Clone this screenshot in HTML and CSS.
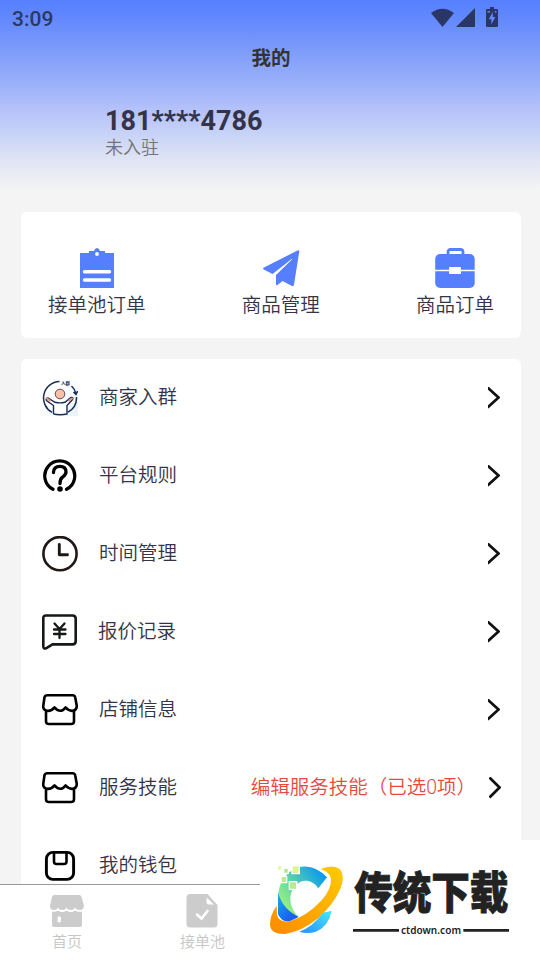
FILE: index.html
```html
<!DOCTYPE html>
<html lang="zh-CN">
<head>
<meta charset="utf-8">
<title>我的</title>
<link rel="stylesheet" href="styles.css">
</head>
<body>
<div class="screen">
  <header class="hero">
    <div class="status">
      <span class="clock">3:09</span>
      <svg class="status-icons" viewBox="0 0 70 22" width="70" height="22">
        <path d="M1 6Q12.500-2.500 24 6L12.500 20Z"/>
        <path d="M45 1V20H26Z"/>
        <path fill-rule="evenodd" d="M60 0h4v2h3q1 0 1 1v16q0 1-1 1H57q-1 0-1-1V3q0-1 1-1h3zM62.800 5L58.800 12.300h2.600v5L65.400 10h-2.600zM57.500 4h2.500v1.500h-2.500zM64.800 4h1.600v1.500h-1.600z"/>
      </svg>
    </div>
    <h1 class="title">我的</h1>
    <div class="profile">
      <div class="phone">181****4786</div>
      <div class="state">未入驻</div>
    </div>
  </header>

  <section class="card shortcuts">
    <div class="shortcut">
      <svg viewBox="0 0 42 42" width="42" height="42"><path d="M4 5h9V3h5q1-3 3-3t3 3h5v2h9v35H4z" fill="#557fff"/><circle cx="21" cy="6" r="1.900" fill="#fff"/><path d="M8.500 23.700h25M8.500 32h25" stroke="#fff" stroke-width="3.500" stroke-linecap="round"/></svg>
      <span>接单池订单</span>
    </div>
    <div class="shortcut">
      <svg viewBox="0 0 42 42" width="42" height="42"><path d="M37.500 2.500Q39.600 1.500 39.200 4L34 36.500Q33.500 39 31.500 37.800L22.500 33 17.500 37Q16 38 16 36V27L32 11.500 32 10.800 12.500 26 3.800 21.500Q2.200 20.500 4 19.500Z" fill="#557fff"/></svg>
      <span>商品管理</span>
    </div>
    <div class="shortcut">
      <svg viewBox="0 0 42 42" width="42" height="42"><path d="M14 8V4q0-2.500 2.500-2.500h10Q29 1.500 29 4v4" fill="none" stroke="#557fff" stroke-width="2.800"/><rect x="1.200" y="6" width="39.500" height="34" rx="5" fill="#557fff"/><path d="M1 22.500h40" stroke="#fff" stroke-width="1.700"/><rect x="15" y="19" width="12" height="7" rx=".8" fill="#fff"/></svg>
      <span>商品订单</span>
    </div>
  </section>

  <section class="card menu">
    <div class="row">
      <svg class="icon" viewBox="0 0 36 36" width="36" height="36">
        <defs><linearGradient id="tile" x2="1" y2="1"><stop offset=".3" stop-color="#fff"/><stop offset="1" stop-color="#e9f3fb"/></linearGradient></defs>
        <path d="M0 0h36v36H0z" fill="url(#tile)"/>
        <path d="M17.500 1.500A16.500 16.500 0 0 0 10 32.400M26 32.200A16.500 16.500 0 0 0 34.500 17M29.500 6Q33 9 34 14M31.500 12l2.500 2.500L35.600 11" fill="none" stroke="#1b2e50" stroke-width="1.500"/>
        <path d="M11.500 34V25.500L4.500 20.500Q3.500 18 6 18L13 22.300Q18 23.500 23 22.300L29 17.500Q31.500 17 30.500 19.500L25 25.500V34Q18 35.500 11.500 34" fill="#fff" stroke="#1b2e50" stroke-width="1.400"/>
        <path d="M5 18.500l3 2M30 18.500l-3 2" stroke="#ef8f79" stroke-width="2" stroke-linecap="round"/>
        <circle cx="18" cy="14" r="4.800" fill="#fac0a4" stroke="#61495a" stroke-width="1"/>
        <text class="tiny" x="19" y="4.500">入群</text>
      </svg>
      <span class="label">商家入群</span>
      <svg class="arrow" viewBox="0 0 12 22" width="12" height="22"><path d="M-.5 .5L10.500 10.500-.5 20.500"/></svg>
    </div>
    <div class="row">
      <svg class="icon line" viewBox="0 0 36 36" width="36" height="36"><path d="M11 31.300A15 15 0 1 1 24.500 31.300" stroke-width="3.200"/><path d="M11.500 14.500Q11.500 8.300 17.800 8.300 24 8.300 24 14 24 16.500 20.500 19.200 18 21 18 25.500" stroke-width="3.300"/><circle cx="18" cy="31" r="1.500" fill="#000"/></svg>
      <span class="label">平台规则</span>
      <svg class="arrow" viewBox="0 0 12 22" width="12" height="22"><path d="M-.5 .5L10.500 10.500-.5 20.500"/></svg>
    </div>
    <div class="row">
      <svg class="icon line warm" viewBox="0 0 36 36" width="36" height="36"><circle cx="18" cy="17.700" r="16.600"/><path d="M17.300 8.500V18.700H25.500" stroke-width="2.900"/></svg>
      <span class="label">时间管理</span>
      <svg class="arrow" viewBox="0 0 12 22" width="12" height="22"><path d="M-.5 .5L10.500 10.500-.5 20.500"/></svg>
    </div>
    <div class="row">
      <svg class="icon line dark" viewBox="0 0 36 36" width="36" height="36"><path d="M4 1.500H30.500Q33.700 1.500 33.700 4.800V27.300Q33.700 30.400 30.500 30.400H10.500L4 34.300Q1.300 35.300 1.300 32.300V4.300Q1.300 1.500 4 1.500Z"/><path d="M12.500 9.500l5 5.500 5-5.500M17.500 15v9M12 15.500h11.500M12 20h11.500" stroke-width="2.300"/></svg>
      <span class="label quote">报价记录</span>
      <svg class="arrow" viewBox="0 0 12 22" width="12" height="22"><path d="M-.5 .5L10.500 10.500-.5 20.500"/></svg>
    </div>
    <div class="row">
      <svg class="icon line" viewBox="0 0 36 36" width="36" height="36"><path d="M5.500 3.200H30.500Q33 3.200 33.300 5.700L34.800 14.200Q34.500 18.700 30 18.900 26.500 18.700 23.500 15.400 18.500 22.200 12.500 15.400 9.500 19.200 5.500 18.900 1 18.200 1.200 14.200L2.400 5.700Q2.700 3.200 5.500 3.200ZM4 19V29.200Q4 32 7 32H29Q32 32 32 29.200V19"/></svg>
      <span class="label">店铺信息</span>
      <svg class="arrow" viewBox="0 0 12 22" width="12" height="22"><path d="M-.5 .5L10.500 10.500-.5 20.500"/></svg>
    </div>
    <div class="row skill">
      <svg class="icon line" viewBox="0 0 36 36" width="36" height="36"><path d="M5.500 3.200H30.500Q33 3.200 33.300 5.700L34.800 14.200Q34.500 18.700 30 18.900 26.500 18.700 23.500 15.400 18.500 22.200 12.500 15.400 9.500 19.200 5.500 18.900 1 18.200 1.200 14.200L2.400 5.700Q2.700 3.200 5.500 3.200ZM4 19V29.200Q4 32 7 32H29Q32 32 32 29.200V19"/></svg>
      <span class="label">服务技能</span>
      <span class="note">编辑服务技能（已选0项）</span>
      <svg class="arrow" viewBox="0 0 12 22" width="12" height="22"><path d="M.5 .5L10.500 10.500 .5 20.500"/></svg>
    </div>
    <div class="row">
      <svg class="icon line" viewBox="0 0 36 36" width="36" height="36"><rect x="4.400" y="4.400" width="27.200" height="27" rx="6.500" stroke-width="2.900"/><path d="M12 5V13.500Q12 16 14.500 16H22Q24.500 16 24.500 13.500V5"/></svg>
      <span class="label">我的钱包</span>
    </div>
  </section>
</div>

<nav class="tabs">
  <div class="tab home">
    <svg viewBox="0 0 36 36" width="36" height="36" fill="#ccc"><path d="M5 2H30Q32 2 32.500 4L35 13Q34.500 17 30.500 17 27 17 26 14.500 25 17 22 17 18.500 17 17.500 14.500 16.500 17 13.500 17 10 17 9 14.500 8 17 5 17 1 17 1 13L3 4Q3.500 2 5 2Z"/><path fill-rule="evenodd" d="M3 18.500Q6.500 19.500 9 17.500 13 20.500 17.500 17.500 22 20.500 26 17.500 29 19.500 33 18.500V32Q33 34 31 34H5Q3 34 3 32ZM8.500 24.500V28.500Q10.200 30.500 12 28.500V24.500Q10.200 22 8.500 24.500Z"/></svg>
    <span>首页</span>
  </div>
  <div class="tab">
    <svg class="pool" viewBox="0 0 36 36" width="36" height="36"><path d="M6.500 1H23.500L33.500 12V31Q33.500 34.500 30 34.500H6.500Q2.500 34.500 2.500 31V5Q2.500 1 6.500 1Z" fill="#ccc"/><path d="M22.500 4.500V9Q22.500 11.500 25 11.500H30Z" fill="#fff"/><path d="M13 21.500l4.500 4L23.500 18" fill="none" stroke="#fff" stroke-width="2.600" stroke-linecap="round"/></svg>
    <span>接单池</span>
  </div>
</nav>

<aside class="brand">
  <svg viewBox="15 15 840 360" width="280" height="120">
    <defs>
      <linearGradient id="cyan" gradientUnits="userSpaceOnUse" x1="80" y1="210" x2="205" y2="115"><stop offset="0" stop-color="#9bf17c"/><stop offset=".4" stop-color="#5fd5a8"/><stop offset="1" stop-color="#0799ee"/></linearGradient>
      <linearGradient id="blue" x2="1" y2="1"><stop stop-color="#16b0f0"/><stop offset=".5" stop-color="#1976ee"/><stop offset="1" stop-color="#1b48ec"/></linearGradient>
      <linearGradient id="orange" x1="0" y1="1" x2="1" y2="0"><stop stop-color="#ff8a00"/><stop offset="1" stop-color="#ffcb00"/></linearGradient>
      <linearGradient id="tail" x1="0" y1="1" x2="1" y2="0"><stop stop-color="#278cff"/><stop offset="1" stop-color="#47ebff"/></linearGradient>
    </defs>
    <path d="M126 98Q175 83 216 127L190 160C172 133 140 130 120 153 98 178 102 220 132 246Q84 232 69 180 75 120 126 98Z" fill="url(#cyan)"/>
    <path d="M69 172Q82 222 131 246L104 259Q80 262 69 238Z" fill="url(#blue)"/>
    <path d="M196 103Q230 87 253 101 273 122 254 166 233 211 190 249 143 288 90 297 48 298 45 270 44 242 65 212L66 240Q72 263 103 259 155 245 200 196 230 162 228 130 222 109 196 103Z" fill="url(#orange)"/>
    <path d="M133 290Q173 275 204 233L230 227Q222 273 181 291 155 297 133 290Z" fill="url(#tail)"/>
    <g stroke="#fff" stroke-width="4"><path d="M111 92h22v24h-22z" fill="#dff391"/><path d="M86 100h14v15H86z" fill="#a9e98d"/><path d="M78 124h17v19H78z" fill="#b4ed89"/><path d="M103 140h22v23h-22z" fill="#b4ed89"/></g>
    <path d="M69 93h9v11h-9z" fill="#e8f5a4"/>
    <path d="M294 286H432M625 286H762" stroke="#222" stroke-width="8"/>
    <text class="brand-name" transform="translate(298 221) scale(1 1.150)" textLength="462">传统下载</text>
    <text class="brand-url" x="438" y="297" textLength="180">ctdown.com</text>
  </svg>
</aside>
</body>
</html>
```

FILE: styles.css
```css
* { box-sizing: border-box; }
body {
  margin: 0;
  width: 540px;
  height: 960px;
  overflow: hidden;
  background: #f4f4f4;
  color: #343348;
  font-family: Roboto, "Noto Sans CJK SC", sans-serif;
  font-weight: 350;
  display: flex;
  flex-direction: column;
}
.screen { height: 884px; flex: none; overflow: hidden; }
.hero {
  height: 212px;
  background: linear-gradient(#557fff 0, #6b8ffc 30px, #93abf9 75px, #b0bffa 105px, #c9d4f7 136px, #e0e4f4 160px, #f4f4f4 190px);
}
.status {
  height: 38px;
  padding: 0 40px 0 12px;
  display: flex;
  justify-content: space-between;
  align-items: center;
}
.clock { font-size: 21px; font-weight: 500; line-height: 38px; color: #2b3863; }
.status-icons { fill: #2a3766; margin-bottom: 2px; }
.title {
  margin: 0;
  text-align: center;
  color: #333;
  font-size: 19.500px;
  font-weight: 700;
  line-height: 42px;
  padding-left: 2px;
}
.profile { padding: 25px 0 0 105px; }
.phone { font-size: 27px; font-weight: 700; line-height: 33px; }
.state { font-size: 18px; line-height: 20px; color: #737373; }
.card { width: 500px; margin-left: 21px; background: #fff; border-radius: 6px; }
.shortcuts {
  height: 126px;
  padding: 35px 27px 0;
  display: flex;
  justify-content: space-between;
}
.shortcut {
  display: flex;
  flex-direction: column;
  align-items: center;
  font-size: 19.500px;
  line-height: 32px;
}
.shortcut svg { margin-top: 1px; }
.menu { margin-top: 21px; padding: 0 21px; }
.row { height: 78px; display: flex; align-items: center; font-size: 19.500px; }
.icon { flex: none; }
.line { fill: none; stroke: #000; stroke-width: 2.600; stroke-linecap: round; stroke-linejoin: round; }
.warm { stroke: #211715; }
.dark { stroke: #141818; }
.tiny { font-size: 4.500px; font-weight: 700; fill: #1b2e50; }
.label { margin-left: 21px; line-height: 30px; }
.quote { margin-left: 20px; }
.arrow { margin-left: auto; fill: none; stroke: #111; stroke-width: 2.700; }
.note { margin-left: auto; color: #e64a3f; line-height: 30px; }
.skill { margin-right: -1px; }
.skill .arrow { margin-left: 13px; }
.tabs {
  height: 76px;
  flex: none;
  border-top: 1px solid #999;
  background: #fff;
  display: grid;
  grid-template-columns: repeat(4, 135px);
}
.tab {
  display: flex;
  flex-direction: column;
  align-items: center;
  padding-top: 8px;
  color: #c6c6c6;
  font-size: 15px;
  line-height: 26px;
}
.home { padding-right: 1px; }
.pool { margin-right: 2px; }
.brand { position: absolute; left: 260px; top: 840px; width: 280px; height: 120px; background: #fff; }
.brand svg { display: block; }
.brand-name { font: 900 116px "Noto Sans CJK SC", sans-serif; fill: #222; stroke: #222; stroke-width: 2; }
.brand-url { font: 600 30px "Noto Sans", sans-serif; fill: #222; }
```
